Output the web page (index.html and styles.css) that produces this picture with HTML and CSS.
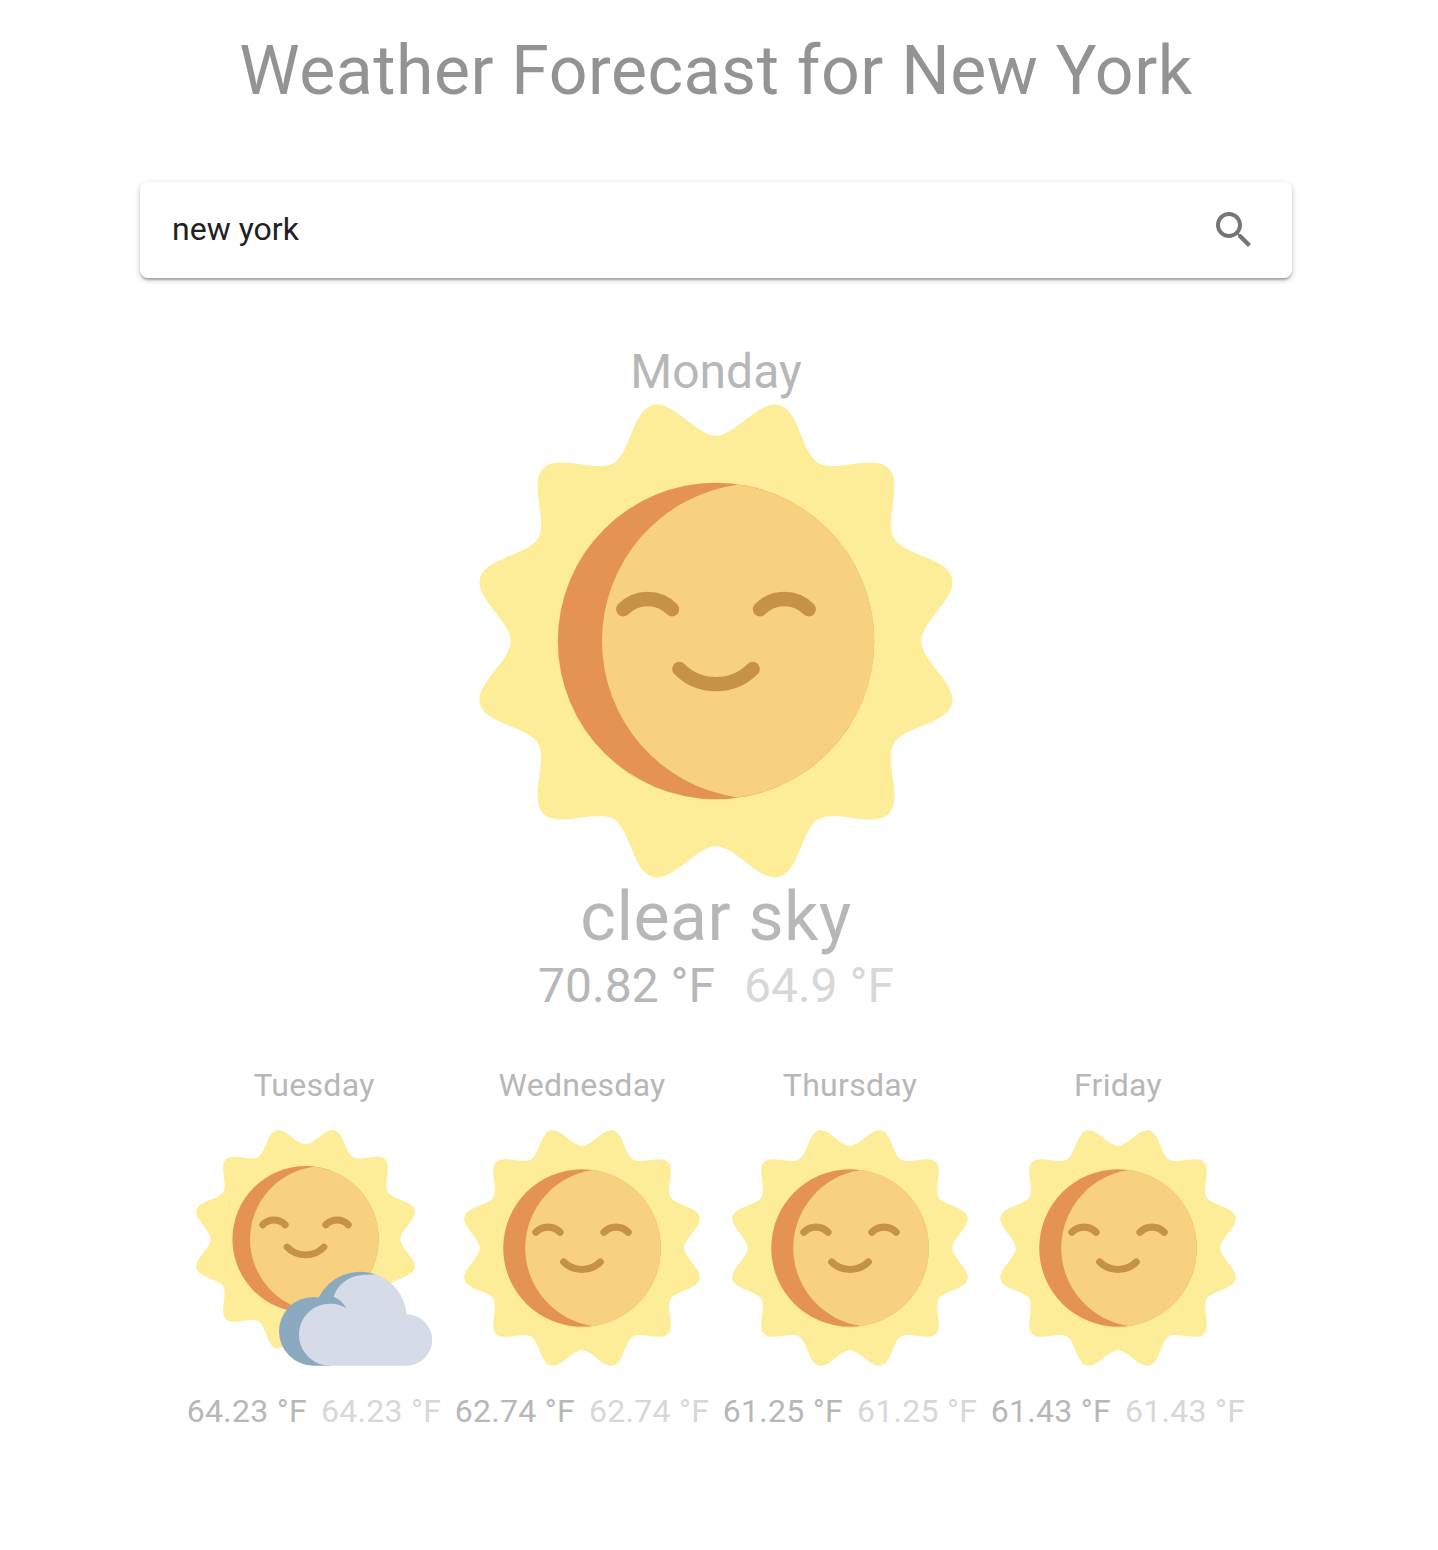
FILE: index.html
```html
<!DOCTYPE html>
<html lang="en">
<head>
<meta charset="utf-8">
<title>Weather Forecast</title>
<link rel="stylesheet" href="styles.css">
</head>
<body>
<svg class="defs" aria-hidden="true">
  <symbol id="rays" viewBox="-237 -237 474 474" overflow="visible">
    <path fill="#fdec98" d="M0-205.3C20-205.3 43-241.4 63.1-236C83.4-230.6 85.4-188 102.65-177.8C120.1-168 158-187.4 172.7-172.7C187.4-158 168-120.1 177.8-102.65C188-85.4 230.6-83.4 236-63.1C241.4-43 205.3-20 205.3 0C205.3 20 241.4 43 236 63.1C230.6 83.4 188 85.4 177.8 102.65C168 120.1 187.4 158 172.7 172.7C158 187.4 120.1 168 102.65 177.8C85.4 188 83.4 230.6 63.1 236C43 241.4 20 205.3 0 205.3C-20 205.3-43 241.4-63.1 236C-83.4 230.6-85.4 188-102.65 177.8C-120.1 168-158 187.4-172.7 172.7C-187.4 158-168 120.1-177.8 102.65C-188 85.4-230.6 83.4-236 63.1C-241.4 43-205.3 20-205.3 0C-205.3-20-241.4-43-236-63.1C-230.6-83.4-188-85.4-177.8-102.65C-168-120.1-187.4-158-172.7-172.7C-158-187.4-120.1-168-102.65-177.8C-85.4-188-83.4-230.6-63.1-236C-43-241.4-20-205.3 0-205.3Z"/>
    <circle r="158.2" fill="#e49353"/>
  </symbol>
  <symbol id="sun" viewBox="-237 -237 474 474" overflow="visible">
    <use href="#rays" x="-237" y="-237" width="474" height="474"/>
    <path fill="#f7d080" d="M22-156.5A158.04 158.04 0 0 0 22 156.5A158 158 0 0 0 22-156.5Z"/>
    <path fill="none" stroke="#c59246" stroke-width="14.4" stroke-linecap="round" d="M-92.7-31.7A34 34 0 0 1-44-31.7M44-31.7A34 34 0 0 1 92.7-31.7M-36.7 28A52 52 0 0 0 36.7 28"/>
  </symbol>
  <symbol id="sun-behind-cloud" viewBox="-237 -237 474 474" overflow="visible">
    <use href="#rays" x="-237" y="-237" width="474" height="474"/>
    <path fill="#f7d080" d="M18-157A158.3 158.3 0 0 0 18 157A158 158 0 0 0 18-157Z"/>
    <path fill="none" stroke="#c59246" stroke-width="15" stroke-linecap="round" d="M-92.5-31.3A34 34 0 0 1-44-31.3M44-31.3A34 34 0 0 1 92.5-31.3M-39.7 17A55 55 0 0 0 39.7 17"/>
  </symbol>
</svg>
<main class="page">
  <h1 class="title">Weather Forecast for New York</h1>
  <form class="search">
    <input class="search-input" type="text" value="new york" aria-label="City">
    <svg class="search-icon" viewBox="0 0 24 24"><path fill="#757575" d="M15.5 14h-.79l-.28-.27C15.41 12.59 16 11.11 16 9.5 16 5.91 13.09 3 9.5 3S3 5.91 3 9.5 5.91 16 9.5 16c1.61 0 3.09-.59 4.23-1.57l.27.28v.79l5 4.99L20.49 19l-4.99-5zm-6 0C7.01 14 5 11.99 5 9.5S7.01 5 9.5 5 14 7.01 14 9.5 11.99 14 9.5 14z"/></svg>
  </form>
  <section class="today">
    <h2 class="today-name">Monday</h2>
    <svg class="today-icon"><use href="#sun"/></svg>
    <p class="today-sky">clear sky</p>
    <p class="today-temps"><span>70.82 °F</span><span class="low">64.9 °F</span></p>
  </section>
  <section class="week">
    <article class="day">
      <h3 class="day-name">Tuesday</h3>
      <svg class="day-icon" viewBox="0 0 236 236">
        <use href="#sun-behind-cloud" x="0" y="-0.3" width="219" height="219"/>
        <g transform="translate(-11 -10) scale(.33333)">
          <path fill="#8caabf" d="M385 737A103 103 0 0 1 385 531L401 532.5A140.6 140.6 0 0 1 573 463L545 500L500 600L435 737Z"/>
          <path fill="#d5dce8" d="M435 737A93 93 0 1 1 484 565C475 548 463 537 446 530C459 489 498 464 545 464L573 463A140.6 140.6 0 0 1 665 583A77 77 0 0 1 664 737Z"/>
        </g>
      </svg>
      <p class="day-temps"><span>64.23 °F</span><span class="low">64.23 °F</span></p>
    </article>
    <article class="day">
      <h3 class="day-name">Wednesday</h3>
      <svg class="day-icon"><use href="#sun"/></svg>
      <p class="day-temps"><span>62.74 °F</span><span class="low">62.74 °F</span></p>
    </article>
    <article class="day">
      <h3 class="day-name">Thursday</h3>
      <svg class="day-icon"><use href="#sun"/></svg>
      <p class="day-temps"><span>61.25 °F</span><span class="low">61.25 °F</span></p>
    </article>
    <article class="day">
      <h3 class="day-name">Friday</h3>
      <svg class="day-icon"><use href="#sun"/></svg>
      <p class="day-temps"><span>61.43 °F</span><span class="low">61.43 °F</span></p>
    </article>
  </section>
</main>
</body>
</html>
```
FILE: styles.css
```css
* { box-sizing: border-box; }
body {
  margin: 0;
  background: #fff;
  color: #b7b7b7;
  font-family: Roboto, "Liberation Sans", sans-serif;
}
h1, h2, h3, p { margin: 0; font-weight: 400; }
.defs { display: none; }
.page {
  display: flex;
  flex-direction: column;
  align-items: center;
  width: 1432px;
  padding-top: 29px;
}
.title {
  font-size: 68px;
  line-height: 84px;
  letter-spacing: 0.00735em;
  color: #939393;
}
.search {
  display: flex;
  align-items: center;
  width: 1152px;
  height: 96px;
  margin-top: 69px;
  padding: 0 34px 0 32px;
  border-radius: 8px;
  background: #fff;
  box-shadow: 0 2px 6px rgba(0, 0, 0, 0.2), 0 2px 2px rgba(0, 0, 0, 0.14), 0 4px 2px -2px rgba(0, 0, 0, 0.12);
}
.search-input {
  flex: 1;
  padding: 0 0 2px;
  border: 0;
  outline: 0;
  background: none;
  font: 32px/38px Roboto, "Liberation Sans", sans-serif;
  color: #212121;
}
.search-icon { width: 48px; height: 48px; }
.today {
  display: flex;
  flex-direction: column;
  align-items: center;
  margin-top: 62px;
}
.today-name { font-size: 48px; line-height: 64px; }
.today-icon { width: 474px; height: 474px; }
.today-sky { font-size: 68px; line-height: 78px; letter-spacing: 0.00735em; }
.today-temps { display: flex; gap: 29px; font-size: 48px; line-height: 59px; }
.low { color: #d7d7d7; }
.week {
  display: grid;
  grid-template-columns: repeat(4, 268px);
  margin-top: 46px;
}
.day { display: flex; flex-direction: column; align-items: center; }
.day-name { font-size: 32px; line-height: 48px; letter-spacing: 0.00938em; }
.day-icon { width: 236px; height: 236px; margin: 21px 0; }
.day-temps {
  display: flex;
  gap: 14px;
  font-size: 32px;
  line-height: 48px;
  letter-spacing: 0.00938em;
  white-space: nowrap;
}
```
